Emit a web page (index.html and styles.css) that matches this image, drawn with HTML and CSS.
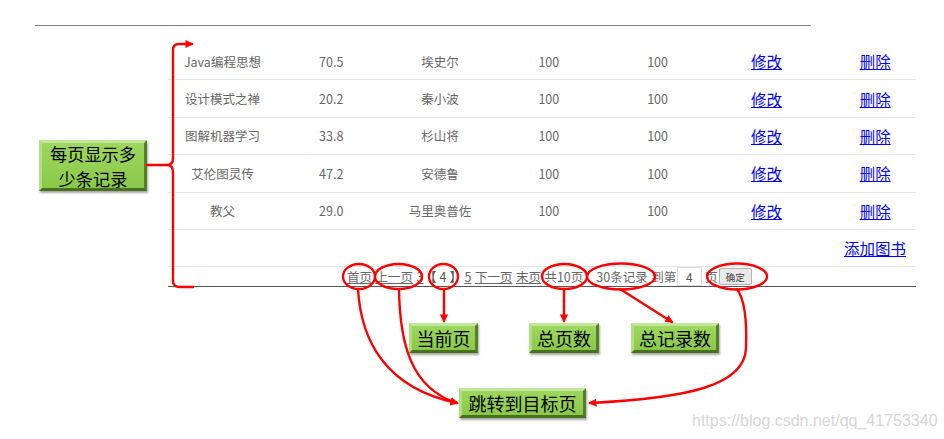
FILE: index.html
```html
<!DOCTYPE html>
<html lang="zh-CN">
<head>
<meta charset="utf-8">
<title>图书列表分页</title>
<link rel="stylesheet" href="styles.css">
</head>
<body>
<div class="topline"></div>
<div class="book-table">
  <div class="row"><span>Java编程思想</span><span>70.5</span><span>埃史尔</span><span>100</span><span>100</span><a class="op" href="#">修改</a><a class="op" href="#">删除</a></div>
  <div class="row"><span>设计模式之禅</span><span>20.2</span><span>秦小波</span><span>100</span><span>100</span><a class="op" href="#">修改</a><a class="op" href="#">删除</a></div>
  <div class="row"><span>图解机器学习</span><span>33.8</span><span>杉山将</span><span>100</span><span>100</span><a class="op" href="#">修改</a><a class="op" href="#">删除</a></div>
  <div class="row"><span>艾伦图灵传</span><span>47.2</span><span>安德鲁</span><span>100</span><span>100</span><a class="op" href="#">修改</a><a class="op" href="#">删除</a></div>
  <div class="row"><span>教父</span><span>29.0</span><span>马里奥普佐</span><span>100</span><span>100</span><a class="op" href="#">修改</a><a class="op" href="#">删除</a></div>
  <div class="add-row"><a class="op" href="#">添加图书</a></div>
  <div class="pager">
    <a href="#">首页</a>
    <a href="#">上一页</a>
    <a href="#">3</a>
    <span class="cur">【4】</span>
    <a href="#">5</a>
    <a href="#">下一页</a>
    <a href="#">末页</a>
    <span>共10页</span>
    <span class="total">30条记录</span>
    <span>到第</span>
    <input class="page-input" type="text" value="4">
    <span>页</span>
    <button class="go" type="button">确定</button>
  </div>
</div>

<div class="note n1"><span class="line">每页显示多</span><span class="line">少条记录</span></div>
<div class="note n2">当前页</div>
<div class="note n3">总页数</div>
<div class="note n4">总记录数</div>
<div class="note n5">跳转到目标页</div>

<svg class="marks" width="944" height="439" viewBox="0 0 944 439" xmlns="http://www.w3.org/2000/svg">
  <defs>
    <marker id="ah" viewBox="0 0 10 10" refX="8" refY="5" markerWidth="3.4" markerHeight="3.4" orient="auto">
      <path d="M0,0 L10,5 L0,10 z" fill="#ff0000"/>
    </marker>
  </defs>
  <g fill="none" stroke="#ff0000" stroke-width="2.4" stroke-linecap="round">
    <path d="M173,158 L173,50 Q173,44 179,44 L192,44" marker-end="url(#ah)"/>
    <path d="M173,172 L173,281 Q173,287 180,287 L193,287"/>
    <path d="M147,165 L167,165 Q173,165 173,158 M167,165 Q173,165 173,172"/>
    <ellipse cx="359" cy="276.5" rx="16" ry="12.5"/>
    <ellipse cx="398.5" cy="276.5" rx="23.5" ry="12.5"/>
    <ellipse cx="443.5" cy="276.5" rx="14.5" ry="12.5"/>
    <ellipse cx="564.5" cy="276.5" rx="22.5" ry="12.5"/>
    <ellipse cx="621" cy="276.5" rx="34" ry="13"/>
    <ellipse cx="737" cy="276.5" rx="30" ry="13"/>
    <path d="M444,289 L444,321" marker-end="url(#ah)"/>
    <path d="M564,289 L564,321" marker-end="url(#ah)"/>
    <path d="M620,289 L672,322" marker-end="url(#ah)"/>
    <path d="M358,289 C361,340 385,388 457,403" marker-end="url(#ah)"/>
    <path d="M399,290 C400,342 410,388 457,403" marker-end="url(#ah)"/>
    <path d="M737,289 C745,300 747,322 746,348 C745,385 690,398 590,403" marker-end="url(#ah)"/>
  </g>
</svg>

<div class="watermark">https://blog.csdn.net/qq_41753340</div>
</body>
</html>
```

FILE: styles.css
```css
html, body {
  margin: 0;
  padding: 0;
  background: #ffffff;
}

body {
  position: relative;
  width: 944px;
  height: 439px;
  overflow: hidden;
  font-family: "Noto Sans CJK SC", "Noto Sans", sans-serif;
  color: #666666;
}

.topline {
  margin: 25px 0 0 35px;
  width: 776px;
  height: 0;
  border-top: 1px solid #808080;
}

.book-table {
  margin: 17px 0 0 168px;
  width: 748px;
}

.row {
  display: grid;
  grid-template-columns: repeat(7, 108.8px);
  align-items: center;
  justify-items: center;
  height: 37.4px;
  box-sizing: border-box;
  border-bottom: 1px solid #e6e6e6;
  font-size: 12.5px;
  color: #666666;
}

.op {
  font-size: 15.5px;
  color: #0000ff;
  text-decoration: underline;
}

.add-row {
  display: flex;
  justify-content: flex-end;
  align-items: center;
  height: 37.4px;
  box-sizing: border-box;
  padding-right: 10px;
  border-bottom: 1px solid #e6e6e6;
}

.pager {
  display: flex;
  justify-content: flex-start;
  align-items: center;
  gap: 3.5px;
  height: 20px;
  box-sizing: border-box;
  padding-left: 179px;
  border-bottom: 1px solid #555555;
  font-size: 12.5px;
  color: #666666;
  white-space: nowrap;
}

.pager a {
  color: #666666;
  text-decoration: underline;
}

.pager .cur {
  color: #555555;
  letter-spacing: 3px;
  margin: 0 -4px 0 -3px;
}

.pager .total {
  margin-left: 9.5px;
}

.page-input {
  width: 25px;
  height: 19px;
  margin-left: -3px;
  box-sizing: border-box;
  border: 1px solid #dddddd;
  padding: 0;
  text-align: center;
  font: 12px "Noto Sans CJK SC", sans-serif;
  color: #555555;
  background: #ffffff;
}

.go {
  width: 33px;
  height: 17px;
  margin-left: -2.5px;
  box-sizing: border-box;
  padding: 0;
  border: 1px solid #b3b3b3;
  border-radius: 2px;
  background: #e9e9e9;
  font: 9.5px "Noto Sans CJK SC", sans-serif;
  color: #444444;
}

.note {
  position: absolute;
  box-sizing: border-box;
  display: flex;
  flex-direction: column;
  align-items: center;
  justify-content: center;
  text-align: center;
  background: linear-gradient(#9dd75e, #8ac948);
  border: 3px solid;
  border-color: #c2e69a #557f29 #49701f #b2dd84;
  box-shadow: 1px 2px 2px rgba(0, 0, 0, 0.35);
  font-family: "Noto Sans CJK SC", sans-serif;
  font-size: 18px;
  line-height: 23px;
  color: #000000;
}

.n1 {
  font-size: 17.2px;
  line-height: 25px;
}

.note .line {
  display: block;
  height: 25px;
}

.n1 { left: 39px; top: 140px; width: 108px; height: 51px; }
.n2 { left: 409px; top: 323px; width: 69px; height: 30px; }
.n3 { left: 529px; top: 323px; width: 70px; height: 30px; }
.n4 { left: 631px; top: 323px; width: 88px; height: 30px; }
.n5 { left: 459px; top: 388px; width: 127px; height: 30px; }

.marks {
  position: absolute;
  left: 0;
  top: 0;
  pointer-events: none;
}

.watermark {
  position: absolute;
  left: 692px;
  top: 412px;
  font-family: "Liberation Sans", Arial, sans-serif;
  font-size: 16px;
  color: #d6d6d6;
  white-space: nowrap;
}
```
